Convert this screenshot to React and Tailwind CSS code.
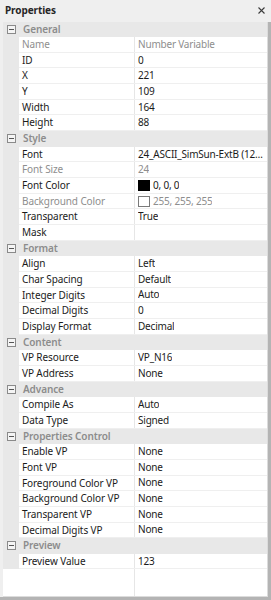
import React from 'react'

const sections = [
  {
    title: 'General',
    rows: [
      { name: 'Name', value: 'Number Variable', disabled: true },
      { name: 'ID', value: '0' },
      { name: 'X', value: '221' },
      { name: 'Y', value: '109' },
      { name: 'Width', value: '164' },
      { name: 'Height', value: '88' },
    ],
  },
  {
    title: 'Style',
    rows: [
      { name: 'Font', value: '24_ASCII_SimSun-ExtB (12x24)' },
      { name: 'Font Size', value: '24', disabled: true },
      { name: 'Font Color', value: '0, 0, 0', swatch: 'black' },
      { name: 'Background Color', value: '255, 255, 255', swatch: 'white', disabled: true },
      { name: 'Transparent', value: 'True' },
      { name: 'Mask', value: '' },
    ],
  },
  {
    title: 'Format',
    rows: [
      { name: 'Align', value: 'Left' },
      { name: 'Char Spacing', value: 'Default' },
      { name: 'Integer Digits', value: 'Auto' },
      { name: 'Decimal Digits', value: '0' },
      { name: 'Display Format', value: 'Decimal' },
    ],
  },
  {
    title: 'Content',
    rows: [
      { name: 'VP Resource', value: 'VP_N16' },
      { name: 'VP Address', value: 'None' },
    ],
  },
  {
    title: 'Advance',
    rows: [
      { name: 'Compile As', value: 'Auto' },
      { name: 'Data Type', value: 'Signed' },
    ],
  },
  {
    title: 'Properties Control',
    rows: [
      { name: 'Enable VP', value: 'None' },
      { name: 'Font VP', value: 'None' },
      { name: 'Foreground Color VP', value: 'None' },
      { name: 'Background Color VP', value: 'None' },
      { name: 'Transparent VP', value: 'None' },
      { name: 'Decimal Digits VP', value: 'None' },
    ],
  },
  {
    title: 'Preview',
    rows: [{ name: 'Preview Value', value: '123' }],
  },
]

// little boxed minus used to collapse a category
const Expander = () => (
  <svg width="9" height="9" viewBox="0 0 9 9">
    <rect x="0.5" y="0.5" width="8" height="8" fill="#f4f4f4" stroke="#8a8a8a" />
    <path d="M2 4.5h5" stroke="#555" />
  </svg>
)

const Category = ({ title }) => (
  <div className="flex h-[15.66px] items-center bg-[#e8e8e8]">
    <div className="flex w-[16px] shrink-0 items-center justify-center">
      <Expander />
    </div>
    <span className="pl-[4px] font-semibold text-[#8c8c8c]">{title}</span>
  </div>
)

const Row = ({ name, value, disabled, swatch }) => {
  const color = disabled ? 'text-[#8e8e8e]' : 'text-[#1b1b1b]'
  return (
    <div className="flex h-[15.66px]">
      <div className="w-[16px] shrink-0 bg-[#e8e8e8]" />
      <div className="flex min-w-0 flex-1 border-b border-[#efefef] bg-white">
        <div className={`w-[116px] shrink-0 truncate border-r border-[#e6e6e6] pl-[3px] ${color}`}>
          {name}
        </div>
        <div className={`flex min-w-0 flex-1 items-center gap-[3px] pl-[3px] ${color}`}>
          {swatch === 'black' && <span className="h-[11px] w-[12px] shrink-0 bg-black" />}
          {swatch === 'white' && (
            <span className="h-[11px] w-[12px] shrink-0 border border-[#7a7a7a] bg-white" />
          )}
          <span className="min-w-0 truncate tracking-[-0.2px]">{value}</span>
        </div>
      </div>
    </div>
  )
}

export default function App() {
  return (
    <div
      className="flex h-[600px] w-[271px] flex-col bg-[#efefef] text-[10px] leading-[15px] tracking-[-0.1px]"
      style={{ fontFamily: '"Noto Sans", "Open Sans", sans-serif' }}
    >
      <div className="flex h-[21.5px] shrink-0 items-center justify-between pl-[5px] pr-[6px]">
        <span className="font-bold text-[#262626]">Properties</span>
        <svg width="7" height="7" viewBox="0 0 7 7">
          <path d="M0.5 0.5l6 6M6.5 0.5l-6 6" stroke="#3c3c3c" strokeWidth="1.1" />
        </svg>
      </div>
      <div className="flex min-h-0 flex-1 flex-col border-r-[3px] border-b-[3px] border-[#b4b4b4] pl-[3px]">
        <div className="flex flex-1 flex-col border-r border-b border-[#dcdcdc] bg-white">
          {sections.map((s) => (
            <div key={s.title}>
              <Category title={s.title} />
              {s.rows.map((r) => (
                <Row key={r.name} {...r} />
              ))}
            </div>
          ))}
          <div className="flex flex-1">
            <div className="w-[132px] shrink-0 border-r border-[#e6e6e6]" />
          </div>
        </div>
      </div>
    </div>
  )
}
